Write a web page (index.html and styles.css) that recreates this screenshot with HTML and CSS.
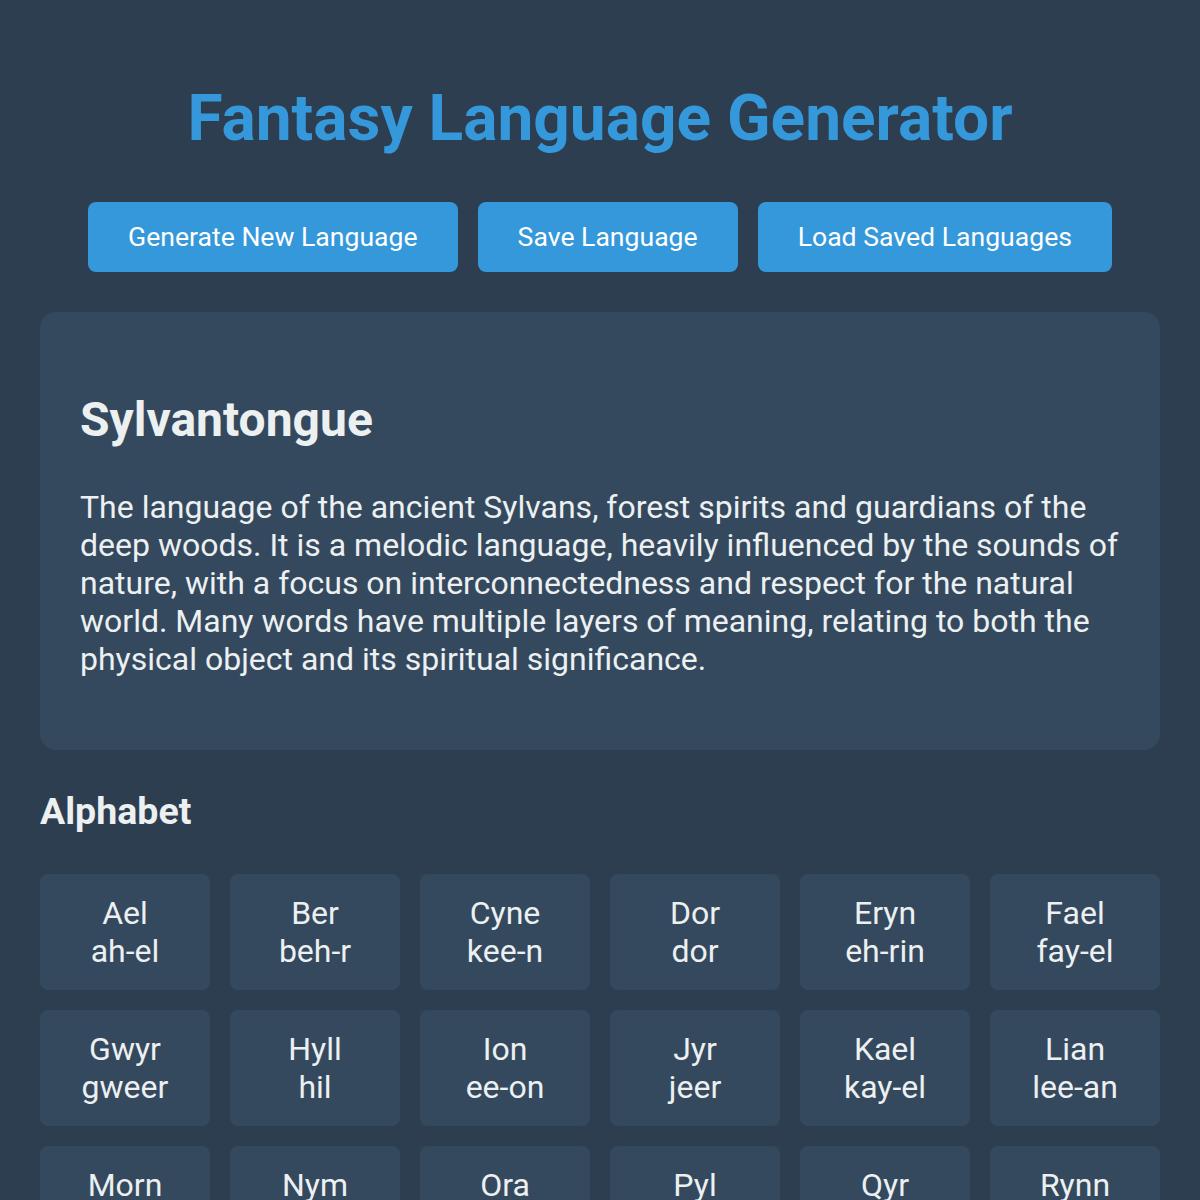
FILE: index.html
```html
<!DOCTYPE html>
<html lang="en">
<head>
  <meta charset="UTF-8">
  <meta name="viewport" content="width=device-width, initial-scale=1.0">
  <title>Fantasy Language Generator</title>
  <link rel="stylesheet" href="styles.css">
</head>
<body>
  <div class="container">
    <h1>Fantasy Language Generator</h1>

    <div class="controls">
      <button>Generate New Language</button>
      <button>Save Language</button>
      <button>Load Saved Languages</button>
    </div>

    <div class="language-card">
      <h2>Sylvantongue</h2>
      <p>The language of the ancient Sylvans, forest spirits and guardians of the deep woods. It is a melodic language, heavily influenced by the sounds of nature, with a focus on interconnectedness and respect for the natural world. Many words have multiple layers of meaning, relating to both the physical object and its spiritual significance.</p>
    </div>

    <h3>Alphabet</h3>
    <div class="alphabet">
      <div class="letter">Ael<br>ah-el</div>
      <div class="letter">Ber<br>beh-r</div>
      <div class="letter">Cyne<br>kee-n</div>
      <div class="letter">Dor<br>dor</div>
      <div class="letter">Eryn<br>eh-rin</div>
      <div class="letter">Fael<br>fay-el</div>
      <div class="letter">Gwyr<br>gweer</div>
      <div class="letter">Hyll<br>hil</div>
      <div class="letter">Ion<br>ee-on</div>
      <div class="letter">Jyr<br>jeer</div>
      <div class="letter">Kael<br>kay-el</div>
      <div class="letter">Lian<br>lee-an</div>
      <div class="letter">Morn<br>morn</div>
      <div class="letter">Nym<br>nim</div>
      <div class="letter">Ora<br>oh-rah</div>
      <div class="letter">Pyl<br>pil</div>
      <div class="letter">Qyr<br>keer</div>
      <div class="letter">Rynn<br>rin</div>
    </div>
  </div>
</body>
</html>
```

FILE: styles.css
```css
body {
  margin: 0;
  padding: 40px;
  background: #2c3e50;
  color: #ecf0f1;
  font-family: Roboto, "Liberation Sans", sans-serif;
  font-size: 32px;
}
.container {
  max-width: 1120px;
  margin: 0 auto;
}
h1 {
  margin: 41px 0 46px 0;
  font-size: 64px;
  text-align: center;
  color: #3498db;
}
.controls {
  display: flex;
  justify-content: center;
  gap: 20px;
  margin-bottom: 40px;
}
button {
  padding: 19px 40px;
  border: none;
  border-radius: 8px;
  background-color: #3498db;
  color: white;
  font-family: inherit;
  font-size: 26.6px;
  line-height: 32px;
  cursor: pointer;
}
.language-card {
  background: #34495e;
  border-radius: 16px;
  padding: 40px;
}
.language-card h2 {
  font-size: 48px;
  margin: 39px 0 40px 0;
}
.language-card p {
  line-height: 38px;
  margin: 0 0 32px 0;
}
h3 {
  font-size: 37.5px;
  margin: 39px 0 41px 0;
}
.alphabet {
  display: grid;
  grid-template-columns: repeat(6, 1fr);
  gap: 20px;
}
.letter {
  background: #34495e;
  border-radius: 8px;
  padding: 20px;
  text-align: center;
  line-height: 38px;
}
```
